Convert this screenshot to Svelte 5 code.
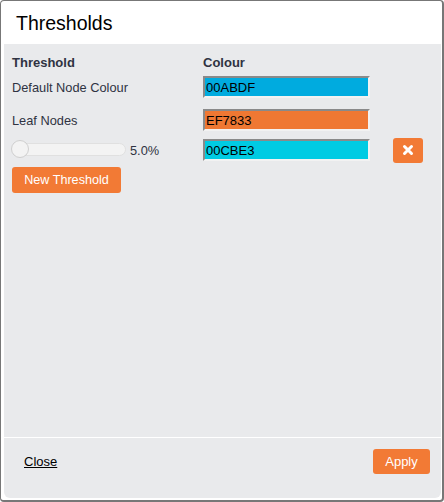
<script>
  let thresholds = [
    { id: 'default', label: 'Default Node Colour', colour: '00ABDF', bg: '#00abdf' },
    { id: 'leaf', label: 'Leaf Nodes', colour: 'EF7833', bg: '#ef7833' }
  ];
  let sliderColour = '00CBE3';
</script>

<div class="dialog">
  <header class="title"><h1>Thresholds</h1></header>
  <div class="content">
    <div class="main">
      <div class="row head">
        <div class="name">Threshold</div>
        <div>Colour</div>
      </div>
      {#each thresholds as t}
        <div class="row item">
          <div class="name">{t.label}</div>
          <input class="colour" type="text" value={t.colour} style="background-color: {t.bg}" />
        </div>
      {/each}
      <div class="row slider-row">
        <div class="name slider">
          <div class="track"><div class="knob"></div></div>
          <span class="pct">5.0%</span>
        </div>
        <input class="colour" type="text" value={sliderColour} style="background-color: #00cbe3" />
        <button class="btn remove" aria-label="Remove">
          <svg width="12" height="12" viewBox="0 0 12 12">
            <path d="M2.5 2.5 L9.5 9.5 M9.5 2.5 L2.5 9.5" stroke="#fff" stroke-width="3" stroke-linecap="round" fill="none" />
          </svg>
        </button>
      </div>
      <button class="btn new">New Threshold</button>
    </div>
    <footer class="foot">
      <a href="#close">Close</a>
      <button class="btn apply">Apply</button>
    </footer>
  </div>
</div>

<style>
  :global(body) {
    margin: 0;
    background: #fff;
  }

  .dialog {
    box-sizing: border-box;
    width: 444px;
    height: 502px;
    display: flex;
    flex-direction: column;
    background: #fff;
    border: 2px solid #777;
    border-width: 1px 2px 2px 1px;
    border-radius: 4px;
    padding: 0 1px 2px 3px;
    font-family: "Liberation Sans", Arial, sans-serif;
    color: #2f3342;
  }

  .title {
    height: 43px;
    flex: none;
    display: flex;
    align-items: center;
    padding: 2px 0 0 12px;
    box-sizing: border-box;
  }

  h1 {
    margin: 0;
    font-size: 19.5px;
    font-weight: 400;
    color: #000;
  }

  .content {
    flex: 1;
    display: flex;
    flex-direction: column;
    background: #e9eaec;
    border-radius: 0 0 6px 6px;
    font-size: 12.8px;
  }

  .main {
    flex: 1;
    padding: 10px 8px 0;
  }

  .row {
    display: flex;
    align-items: center;
  }

  .name {
    width: 191px;
    flex: none;
  }

  .head {
    font-weight: 700;
    height: 17px;
    font-size: 13px;
  }

  .item {
    height: 34px;
  }

  .item:nth-of-type(2) {
    height: 32px;
  }

  .colour {
    box-sizing: border-box;
    width: 167px;
    height: 22px;
    padding: 0 1px;
    margin: 0;
    border: 2px solid;
    border-color: #8a8a8a #f2f2f2 #f2f2f2 #8a8a8a;
    font-family: "Liberation Sans", Arial, sans-serif;
    font-size: 13px;
    color: #000;
    border-radius: 0;
  }

  .slider-row {
    height: 26px;
  }

  .slider {
    display: flex;
    align-items: center;
  }

  .track {
    position: relative;
    width: 112px;
    height: 11px;
    margin-top: -2px;
    background: #f3f3f3;
    border: 1px solid #e0e0e0;
    border-radius: 7px;
  }

  .knob {
    position: absolute;
    left: -2px;
    top: -4px;
    width: 16px;
    height: 16px;
    background: #f3f3f3;
    border: 1px solid #cfcfcf;
    border-radius: 50%;
  }

  .pct {
    margin-left: 4px;
  }

  .btn {
    border: none;
    border-radius: 3px;
    background: #f27a35;
    color: #fff;
    font-family: "Liberation Sans", Arial, sans-serif;
    font-size: 12.6px;
    padding: 0;
  }

  .remove {
    width: 30px;
    height: 25px;
    margin-left: 23px;
    display: flex;
    align-items: center;
    justify-content: center;
  }

  .new {
    width: 109px;
    height: 26px;
    margin-top: 4px;
    display: block;
  }

  .foot {
    height: 61px;
    flex: none;
    display: flex;
    align-items: center;
    justify-content: space-between;
    border-top: 1px solid #fff;
    padding: 0 11px 14px 20px;
    box-sizing: border-box;
  }

  .foot a {
    color: #000;
    font-size: 13px;
  }

  .apply {
    width: 57px;
    height: 25px;
    font-size: 13px;
  }
</style>
